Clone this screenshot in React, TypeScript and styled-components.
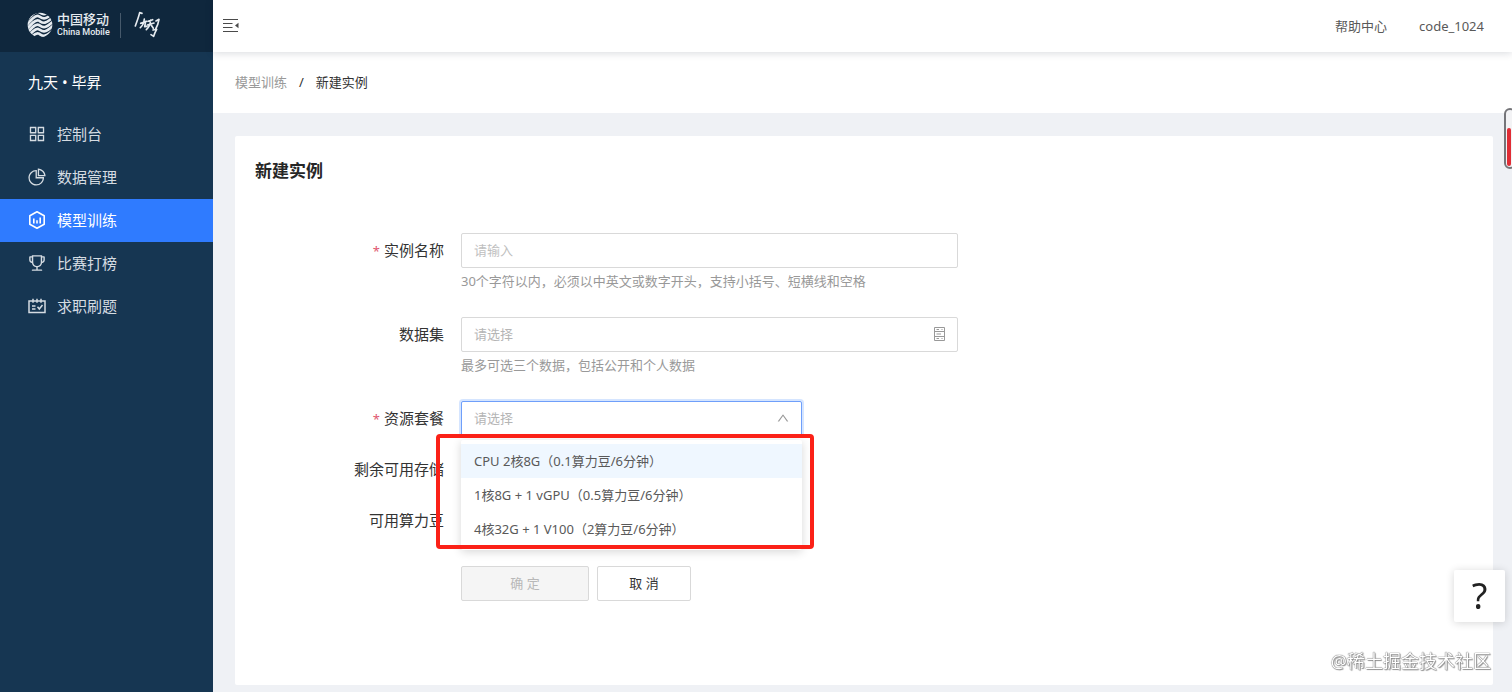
import React from "react";
import styled, { createGlobalStyle } from "styled-components";
import { AiOutlineAppstore, AiOutlinePieChart, AiOutlineTrophy, AiOutlineUp } from "react-icons/ai";

const GlobalStyle = createGlobalStyle`
  *, *::before, *::after { box-sizing: border-box; }
  body {
    margin: 0;
    color: #333;
    background: #eff1f5;
    font: 13px/20px "Noto Sans", "Noto Sans CJK SC", sans-serif;
  }
  button, input, select { font: inherit; color: inherit; }
`;

const Shell = styled.div`
  display: flex;
  min-height: 100vh;
`;

const Sidebar = styled.aside`
  flex: none;
  width: 213px;
  background: #163652;
`;

const Brand = styled.div`
  display: flex;
  align-items: center;
  height: 52px;
  padding: 0 0 2px 27px;
  background: #0f273d;
  color: #e6ebf0;
`;

const BrandName = styled.div`
  display: flex;
  flex-direction: column;
  margin-left: 4px;
  font-family: Roboto, "Noto Sans CJK SC", sans-serif;
  font-weight: 500;
`;

const BrandChinese = styled.span`
  font-size: 13px;
  line-height: 14px;
`;

const BrandEnglish = styled.span`
  font-size: 9px;
  line-height: 10px;
`;

const BrandDivider = styled.span`
  width: 1px;
  height: 25px;
  margin: 0 13px 0 10px;
  background: #46596b;
`;

const ProductName = styled.div`
  padding: 18px 28px 19px;
  color: #fff;
  font-size: 15px;
  line-height: 24px;
`;

const MenuLink = styled.a<{ $active?: boolean }>`
  display: flex;
  align-items: center;
  gap: 10px;
  height: 43px;
  padding: 0 0 2px 27px;
  color: ${(p) => (p.$active ? "#fff" : "#d5dce2")};
  background: ${(p) => (p.$active ? "#2f7bff" : "transparent")};
  font-size: 15px;
  text-decoration: none;
  svg { flex: none; }
`;

const Page = styled.div`
  flex: 1;
  min-width: 0;
  display: flex;
  flex-direction: column;
`;

const Header = styled.header`
  position: relative;
  display: flex;
  align-items: center;
  gap: 32px;
  height: 52px;
  padding: 0 28px 0 10px;
  background: #fff;
  box-shadow: 0 1px 8px rgba(0, 21, 41, 0.16);
`;

const FoldButton = styled.button`
  display: flex;
  margin-right: auto;
  padding: 0;
  border: 0;
  background: none;
`;

const HeaderLink = styled.a`
  color: #595959;
  text-decoration: none;
`;

const Breadcrumb = styled.nav`
  display: flex;
  align-items: center;
  gap: 12px;
  height: 61px;
  padding: 0 22px 2px;
  background: #fff;
  color: #333;
  a { color: #999; text-decoration: none; }
`;

const Main = styled.main`
  flex: 1;
  display: flex;
  padding: 23px 19px 7px 22px;
`;

const Card = styled.section`
  flex: 1;
  padding: 21px 20px;
  border-radius: 2px;
  background: #fff;
`;

const Title = styled.h1`
  margin: 0 0 48px;
  color: #262626;
  font-size: 17px;
  line-height: 28px;
  font-weight: 700;
`;

const Row = styled.div<{ $gap?: number }>`
  display: grid;
  grid-template-columns: 189px minmax(0, 497px);
  column-gap: 17px;
  margin-bottom: ${(p) => p.$gap ?? 16}px;
`;

const Label = styled.label<{ $required?: boolean }>`
  height: 35px;
  color: #333;
  font-size: 15px;
  line-height: 34px;
  text-align: right;
  &::before {
    content: ${(p) => (p.$required ? '"*"' : "none")};
    margin-right: 4px;
    color: #e0566f;
    font-size: 13px;
  }
`;

const Field = styled.div<{ $narrow?: boolean }>`
  position: relative;
  height: 35px;
  max-width: ${(p) => (p.$narrow ? "341px" : "none")};
  > svg {
    position: absolute;
    top: 10px;
    right: 12px;
    color: #999;
    pointer-events: none;
  }
`;

const fieldLook = `
  display: block;
  width: 100%;
  height: 35px;
  padding: 0 12px 2px;
  border: 1px solid #d9d9d9;
  border-radius: 2px;
  background: #fff;
  outline: none;
`;

const TextInput = styled.input`
  ${fieldLook}
  &::placeholder { color: #bfbfbf; opacity: 1; }
`;

const Select = styled.select<{ $open?: boolean }>`
  ${fieldLook}
  appearance: none;
  color: #b5b5b5;
  border-color: ${(p) => (p.$open ? "#6f9ffa" : "#d9d9d9")};
  box-shadow: ${(p) => (p.$open ? "0 0 0 2px rgba(47, 123, 255, 0.2)" : "none")};
`;

const Hint = styled.div`
  height: 28px;
  color: #999;
  line-height: 27px;
`;

const OptionList = styled.ul`
  position: absolute;
  z-index: 1;
  top: 39px;
  left: 0;
  right: 0;
  margin: 0;
  padding: 4px 0;
  border-radius: 2px;
  background: #fff;
  box-shadow: 0 2px 10px rgba(0, 0, 0, 0.16);
  list-style: none;
`;

const Option = styled.li<{ $active?: boolean }>`
  padding: 0 13px;
  color: #595959;
  line-height: 34px;
  background: ${(p) => (p.$active ? "#eff7ff" : "transparent")};
`;

const Highlight = styled.div`
  position: absolute;
  z-index: 2;
  top: 33px;
  left: -25px;
  right: -12px;
  height: 115px;
  border: 4px solid #fb2117;
  border-radius: 4px;
  pointer-events: none;
`;

const Actions = styled.div`
  display: flex;
  gap: 8px;
  margin: 28px 0 0 206px;
`;

const Button = styled.button<{ $wide?: boolean }>`
  width: ${(p) => (p.$wide ? 128 : 94)}px;
  height: 35px;
  padding: 0 0 2px;
  border: 1px solid #d9d9d9;
  border-radius: 2px;
  color: #333;
  background: #fff;
  &:disabled { color: #b8b8b8; background: #f5f5f5; }
`;

const HelpButton = styled.button`
  position: fixed;
  right: 7px;
  bottom: 70px;
  width: 51px;
  height: 52px;
  padding: 0;
  border: 0;
  border-radius: 2px;
  background: #fff;
  color: #222;
  box-shadow: 0 1px 8px rgba(0, 0, 0, 0.16);
  font: 36px/52px "Noto Sans", sans-serif;
`;

const Gauge = styled.div`
  position: fixed;
  top: 108px;
  right: -4px;
  width: 12px;
  height: 61px;
  padding: 18px 1px 1px;
  border: 2px solid #757579;
  border-radius: 6px;
  background: #f3f3f5;
`;

const GaugeLevel = styled.div`
  width: 4px;
  height: 38px;
  border-radius: 2px;
  background: #e02d35;
`;

const Watermark = styled.div`
  position: fixed;
  right: 21px;
  bottom: 17px;
  color: #fff;
  font-size: 18px;
  line-height: 28px;
  text-shadow: 0 0 1px #555, 0 0 1px #777, 1px 1px 1px #999;
`;

const MobileEmblem = () => (
  <svg width="26" height="26" viewBox="0 0 78 78" fill="none" stroke="currentColor" aria-hidden="true">
    <clipPath id="disc"><circle cx="39" cy="39" r="37" /></clipPath>
    <g clipPath="url(#disc)" strokeWidth="8">
      {[-12, 1, 14, 27, 40, 53].map((y) => (
        <path key={y} transform={`translate(0 ${y})`} d="M-6 44C12 22 26 6 36 12S52 28 84 -4" />
      ))}
    </g>
  </svg>
);

const JiutianMark = () => (
  <svg width="28" height="30" viewBox="0 0 84 90" fill="none" stroke="currentColor" strokeLinecap="round" strokeLinejoin="round" aria-hidden="true">
    <path d="M17 8C14 22 8 36 4 48M17 8L24 10" strokeWidth="5" />
    <path d="M20 40L38 34M31 27C30 39 26 47 19 53M35 34L32 50L39 49" strokeWidth="5" />
    <path d="M42 34L56 29M40 45L60 39M50 30C49 43 44 53 37 59M50 43L58 55" strokeWidth="5" />
    <path d="M66 33L75 28C73 40 69 50 65 57M57 60L68 58C64 65 61 72 59 79L51 74" strokeWidth="5" />
  </svg>
);

const FoldIcon = () => (
  <svg width="16" height="16" viewBox="0 0 16 16" stroke="#4a4a4a" fill="none" aria-hidden="true">
    <path d="M0 1.5H15M0 5.5H9.5M0 9.5H9.5M0 13.5H15" strokeWidth="1.2" />
    <path d="M15.5 4.8V10.2L12 7.5Z" fill="#4a4a4a" stroke="none" />
  </svg>
);

const ModelIcon = () => (
  <svg width="20" height="20" viewBox="0 0 20 20" fill="none" stroke="currentColor" strokeWidth="1.6" aria-hidden="true">
    <path d="M10 1.8L17.2 5.8V14.2L10 18.2L2.8 14.2V5.8Z" strokeLinejoin="round" />
    <path d="M6.8 8.5V13.5M10 10.2V13.5M13.2 7.5V13.5" />
  </svg>
);

const ExamIcon = () => (
  <svg width="20" height="20" viewBox="0 0 20 20" fill="none" stroke="currentColor" strokeWidth="1.5" aria-hidden="true">
    <path d="M2 5H18V16.5H2ZM6 2.8V6.8M10 2.8V6.8M14 2.8V6.8M5 10H8.5M5 13H8.5M10.5 10.8L12.3 13L15.5 9" />
  </svg>
);

const DatasetIcon = () => (
  <svg width="13" height="14" viewBox="0 0 13 14" fill="none" stroke="currentColor" aria-hidden="true">
    <path d="M1.5 0.5H11.5V13.5H1.5ZM1.5 4.5H11.5M1.5 9.5H11.5M3.5 2.5H6M3.5 7H8M3.5 11.5H6M8.5 2.5H9.5M8.5 11.5H9.5" />
  </svg>
);

const menu = [
  { text: "控制台", icon: <AiOutlineAppstore size={20} /> },
  { text: "数据管理", icon: <AiOutlinePieChart size={20} /> },
  { text: "模型训练", icon: <ModelIcon />, active: true },
  { text: "比赛打榜", icon: <AiOutlineTrophy size={20} /> },
  { text: "求职刷题", icon: <ExamIcon /> },
];

const packages = [
  "CPU 2核8G（0.1算力豆/6分钟）",
  "1核8G + 1 vGPU（0.5算力豆/6分钟）",
  "4核32G + 1 V100（2算力豆/6分钟）",
];

export default function App() {
  return (
    <>
      <GlobalStyle />
      <Shell>
        <Sidebar>
          <Brand>
            <MobileEmblem />
            <BrandName>
              <BrandChinese>中国移动</BrandChinese>
              <BrandEnglish>China Mobile</BrandEnglish>
            </BrandName>
            <BrandDivider />
            <JiutianMark />
          </Brand>
          <ProductName>九天 • 毕昇</ProductName>
          <nav>
            {menu.map((item) => (
              <MenuLink key={item.text} href="#" $active={item.active}>
                {item.icon}
                {item.text}
              </MenuLink>
            ))}
          </nav>
        </Sidebar>
        <Page>
          <Header>
            <FoldButton type="button" aria-label="收起菜单"><FoldIcon /></FoldButton>
            <HeaderLink href="#">帮助中心</HeaderLink>
            <HeaderLink href="#">code_1024</HeaderLink>
          </Header>
          <Breadcrumb>
            <a href="#">模型训练</a>
            <span>/</span>
            <span>新建实例</span>
          </Breadcrumb>
          <Main>
            <Card>
              <Title>新建实例</Title>
              <form>
                <Row $gap={21}>
                  <Label htmlFor="name" $required>实例名称</Label>
                  <div>
                    <Field><TextInput id="name" placeholder="请输入" /></Field>
                    <Hint>30个字符以内，必须以中英文或数字开头，支持小括号、短横线和空格</Hint>
                  </div>
                </Row>
                <Row $gap={21}>
                  <Label htmlFor="dataset">数据集</Label>
                  <div>
                    <Field>
                      <Select id="dataset"><option>请选择</option></Select>
                      <DatasetIcon />
                    </Field>
                    <Hint>最多可选三个数据，包括公开和个人数据</Hint>
                  </div>
                </Row>
                <Row>
                  <Label htmlFor="package" $required>资源套餐</Label>
                  <Field $narrow>
                    <Select id="package" $open><option>请选择</option></Select>
                    <AiOutlineUp size={14} />
                    <OptionList role="listbox" aria-label="资源套餐">
                      {packages.map((text, i) => (
                        <Option key={text} role="option" aria-selected={i === 0} $active={i === 0}>{text}</Option>
                      ))}
                    </OptionList>
                    <Highlight />
                  </Field>
                </Row>
                <Row><Label as="span">剩余可用存储</Label></Row>
                <Row><Label as="span">可用算力豆</Label></Row>
                <Actions>
                  <Button type="button" disabled $wide>确 定</Button>
                  <Button type="button">取 消</Button>
                </Actions>
              </form>
            </Card>
          </Main>
        </Page>
      </Shell>
      <Gauge><GaugeLevel /></Gauge>
      <HelpButton type="button" aria-label="帮助">?</HelpButton>
      <Watermark>@稀土掘金技术社区</Watermark>
    </>
  );
}
